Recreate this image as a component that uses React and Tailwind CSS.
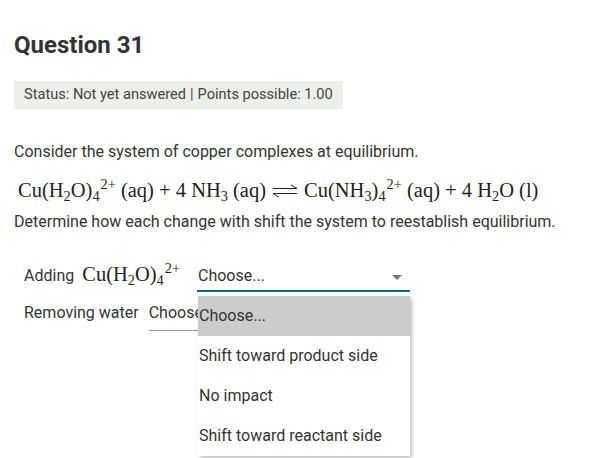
import React from 'react';

const serif = { fontFamily: '"Liberation Serif", "DejaVu Serif", serif' };

// little helpers for the chemistry bits
const Sub = ({ children }) => (
  <span className="relative top-[0.28em] text-[0.7em]">{children}</span>
);
const Sup = ({ children }) => (
  <span className="relative -top-[0.55em] text-[0.7em] ml-[1px]">{children}</span>
);

function Harpoons() {
  return (
    <svg width="26" height="14" viewBox="0 0 26 14" className="inline-block align-middle mx-[6px] -mt-[3px]">
      <path d="M1 4.5 H25 M25 4.5 L19 0.8" stroke="#222" strokeWidth="1" fill="none" />
      <path d="M25 9.5 H1 M1 9.5 L7 13.2" stroke="#222" strokeWidth="1" fill="none" />
    </svg>
  );
}

function Caret() {
  return (
    <svg width="10" height="6" viewBox="0 0 10 6" className="absolute right-[8px] top-[9px]">
      <path d="M0 0 L10 0 L5 5 Z" fill="#777" />
    </svg>
  );
}

export default function App() {
  const options = ['Choose...', 'Shift toward product side', 'No impact', 'Shift toward reactant side'];

  return (
    <div
      className="w-[612px] h-[458px] bg-white text-[#333] overflow-hidden px-[14px] pt-[31px]"
      style={{ fontFamily: 'Roboto, "Liberation Sans", sans-serif' }}
    >
      <h2 className="text-[24px] font-bold leading-[28px] text-[#333]">Question 31</h2>

      <div className="mt-[22px] inline-flex items-center h-[28px] px-[10px] bg-[#edf0ea] text-[14.6px] text-[#444]">
        Status: Not yet answered <span className="mx-[4px] text-[#6e2a6c]">|</span> Points possible: 1.00
      </div>

      <p className="mt-[33px] text-[16px] leading-[20px]">Consider the system of copper complexes at equilibrium.</p>

      <div className="mt-[16px] h-[24px] leading-[24px] pl-[4px] text-[20.5px] text-[#222] whitespace-nowrap" style={serif}>
        Cu(H<Sub>2</Sub>O)<Sub>4</Sub><Sup>2+</Sup> (aq) + 4 NH<Sub>3</Sub> (aq)
        <Harpoons />
        Cu(NH<Sub>3</Sub>)<Sub>4</Sub><Sup>2+</Sup> (aq) + 4 H<Sub>2</Sub>O (l)
      </div>

      <p className="mt-[10px] text-[16px] leading-[20px]">
        Determine how each change with shift the system to reestablish equilibrium.
      </p>

      <div className="mt-[32px] pl-[10px] flex flex-col text-[16px]">
        <div className="flex items-baseline">
          <span className="leading-[20px]">Adding</span>
          <span className="ml-[8px] text-[20.5px] leading-[20px] text-[#222] whitespace-nowrap" style={serif}>
            Cu(H<Sub>2</Sub>O)<Sub>4</Sub><Sup>2+</Sup>
          </span>
          <div className="relative ml-[17px] w-[213px] pb-[4px] border-b-2 border-[#14687d]">
            <span className="block leading-[20px] pl-[1px]">Choose...</span>
            <Caret />
            <ul className="absolute left-[1px] top-[30px] w-[212px] bg-white shadow-[2px_2px_4px_rgba(0,0,0,0.25)] z-10">
              {options.map((o, i) => (
                <li
                  key={o}
                  className={`h-[40px] flex items-center pl-[1px] text-[16px] text-[#333] ${
                    i === 0 ? 'bg-[#cccccc]' : ''
                  }`}
                >
                  {o}
                </li>
              ))}
            </ul>
          </div>
        </div>

        <div className="mt-[11px] flex items-baseline">
          <span className="leading-[20px]">Removing water</span>
          <div className="relative ml-[10px] w-[213px] pb-[7px] border-b border-[#999]">
            <span className="block leading-[20px]">Choose...</span>
          </div>
        </div>
      </div>
    </div>
  );
}
